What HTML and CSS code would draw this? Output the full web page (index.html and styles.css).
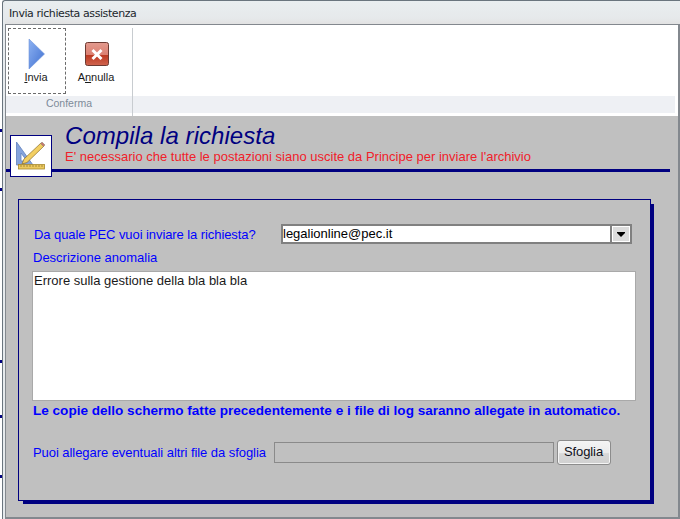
FILE: index.html
```html
<!DOCTYPE html>
<html lang="it">
<head>
<meta charset="utf-8">
<title>Invia richiesta assistenza</title>
<link rel="stylesheet" href="styles.css">
</head>
<body>
<i class="tick tick-a"></i><i class="tick tick-b"></i><i class="tick tick-c"></i><i class="tick tick-d"></i><i class="tick tick-e"></i>
<div class="window">
  <div class="titlebar">Invia richiesta assistenza</div>
  <div class="client">
    <div class="ribbon">
      <div class="group">
        <div class="group-buttons">
          <div class="rbtn rbtn-focus">
            <svg class="rico" width="32" height="34" viewBox="0 0 32 34">
              <defs><linearGradient id="pl" x1="0" y1="0" x2="1" y2="1"><stop offset="0" stop-color="#8db2f2"/><stop offset="1" stop-color="#3f6fd0"/></linearGradient></defs>
              <path d="M8 1 L23.5 16 L8 31 Z" fill="url(#pl)" stroke="#6f94da" stroke-width=".6"/>
            </svg>
            <span class="rlabel"><u>I</u>nvia</span>
          </div>
          <div class="rbtn rbtn-plain">
            <svg class="rico" width="32" height="34" viewBox="0 0 32 34">
              <defs><linearGradient id="rd" x1="0" y1="0" x2="0" y2="1"><stop offset="0" stop-color="#e39a8e"/><stop offset=".55" stop-color="#dc7f70"/><stop offset=".56" stop-color="#bd3a22"/><stop offset="1" stop-color="#d0654f"/></linearGradient></defs>
              <rect x="4.5" y="4.5" width="23" height="23" rx="2" fill="url(#rd)" stroke="#6d3a32"/>
              <path d="M11.5 12 L20.5 21 M20.5 12 L11.5 21" stroke="#fff" stroke-width="3"/>
            </svg>
            <span class="rlabel">A<u>n</u>nulla</span>
          </div>
        </div>
        <div class="group-name">Conferma</div>
      </div>
      <div class="group-rest"><div class="rest-strip"></div></div>
    </div>
    <div class="body">
      <div class="header">
        <div class="logo">
          <svg width="32" height="32" viewBox="0 0 32 32">
            <path d="M1.5 2 L1.5 25 L18 25 Z M6 13 L6 21 L12 21 Z" fill="#86a4dc" fill-rule="evenodd" stroke="#5f80bd" stroke-width=".8"/>
            <path d="M7 24 L9 19 L26 3 L29 6 L12 22.5 Z" fill="#f3cf62" stroke="#8a6d2a" stroke-width=".7"/>
            <path d="M25.5 3.5 L27 2 L30 5 L28.5 6.5 Z" fill="#c9776d" stroke="#7f8a70" stroke-width=".5"/>
            <rect x="3.5" y="24.5" width="26" height="4.5" fill="#ecc95e" stroke="#a8892f" stroke-width=".8"/>
            <path d="M6 25v2M9 25v2M12 25v2M15 25v2M18 25v2M21 25v2M24 25v2M27 25v2" stroke="#8a6d2a" stroke-width=".7"/>
          </svg>
        </div>
        <div class="heading">
          <div class="title">Compila la richiesta</div>
          <div class="subtitle">E' necessario che tutte le postazioni siano uscite da Principe per inviare l'archivio</div>
        </div>
      </div>
      <div class="panel">
        <div class="row-pec">
          <span class="lbl">Da quale PEC vuoi inviare la richiesta?</span>
          <div class="combo">
            <span class="combo-val">legalionline@pec.it</span>
            <span class="combo-btn"><svg width="8" height="5" viewBox="0 0 8 5"><path d="M0 0H8V1L4 5L0 1Z" fill="#000"/></svg></span>
          </div>
        </div>
        <div class="lbl-desc">Descrizione anomalia</div>
        <div class="memo">Errore sulla gestione della bla bla bla</div>
        <div class="note">Le copie dello schermo fatte precedentemente e i file di log saranno allegate in automatico.</div>
        <div class="row-file">
          <span class="lbl lbl-file">Puoi allegare eventuali altri file da sfoglia</span>
          <div class="file-input"></div>
          <div class="browse">Sfoglia</div>
        </div>
      </div>
    </div>
  </div>
</div>
</body>
</html>
```
FILE: styles.css
```css
* { box-sizing: border-box; }
html, body { margin: 0; padding: 0; }
body {
  width: 680px; height: 519px; overflow: hidden; background: #fff;
  padding-left: 2px; position: relative;
  font-family: "Liberation Sans", Arial, sans-serif;
}
.tick { position: absolute; left: 0; width: 2px; height: 3px; background: #000080; }
.tick-a { top: 129px; }
.tick-b { top: 188px; }
.tick-c { top: 360px; }
.tick-d { top: 415px; }
.tick-e { top: 475px; }
.window {
  width: 678px; height: 519px; display: flex; flex-direction: column;
  background: #e6eaed; border: 1px solid #6a757e; border-bottom: 0; border-right: 0;
  border-top-left-radius: 3px; padding-left: 2px;
}
.titlebar {
  height: 23px; padding: 6px 0 0 4px; font: 11px/14px "DejaVu Sans", sans-serif;
  color: #20262c; letter-spacing: -.42px;
  background: linear-gradient(#e9eef0, #e6e9eb 75%, #e2e2e2);
}
.client {
  flex: 1; display: flex; flex-direction: column; min-height: 0;
  border: 1px solid #83888e; border-width: 1px 2px 2px 1px; background: #c0c0c0;
}
.ribbon { height: 91px; display: flex; background: #fff; }
.group { width: 127px; display: flex; flex-direction: column; border-right: 1px solid #c8ccd0; margin-top: 3px; }
.group-buttons { height: 68px; display: flex; padding-left: 2px; gap: 2px; }
.rbtn { width: 58px; height: 66px; display: flex; flex-direction: column; align-items: center; font-size: 11px; color: #1a1a1a; }
.rbtn-focus { border: 1px dashed #6b6b6b; }
.rbtn-plain { border: 1px solid transparent; }
.rico { display: block; margin-top: 9px; }
.rlabel { margin: -2px 0 0 -2px; line-height: 14px; }
.group-name {
  height: 17px; background: #eef0f4; text-align: center;
  font-size: 10.5px; line-height: 14px; color: #7d8b99;
}
.group-rest { flex: 1; padding-top: 71px; padding-right: 3px; }
.rest-strip { height: 17px; background: #eef0f4; }
.body { flex: 1; min-height: 0; background: #c0c0c0; }
.header { position: relative; height: 54px; margin-top: 1px; padding: 6px 0 0 59px; }
.header::after {
  content: ""; position: absolute; left: 0; right: 8px; top: 52px; height: 3px; background: #000080;
}
.logo {
  position: absolute; left: 4px; top: 18px; width: 42px; height: 42px; z-index: 1;
  background: #fff; border: 1px solid #000080; display: flex; align-items: center; justify-content: center;
}
.title { font-size: 24px; line-height: 26px; font-style: italic; color: #000080; letter-spacing: .05px; }
.subtitle { font-size: 13px; line-height: 14px; color: #f0202a; margin-top: 1px; }
.panel {
  margin: 28px 0 0 12px; width: 633px; height: 302px; border: 1px solid #000080;
  box-shadow: 4px 4px 0 -1px #000080; padding: 24px 0 0 14px;
}
.row-pec { display: flex; align-items: center; height: 20px; }
.lbl { font-size: 13px; color: #0000ff; white-space: nowrap; letter-spacing: -.08px; }
.lbl-file { letter-spacing: -.06px; }
.row-pec .lbl { width: 247px; margin-left: 1px; }
.combo {
  width: 351px; height: 20px; display: flex; background: #fff; border: 2px solid #808080;
}
.combo-val { flex: 1; font-size: 13px; line-height: 16px; color: #000; }
.combo-btn {
  width: 18px; display: flex; align-items: center; justify-content: center;
  background: #dcdcdc; border: 1px solid #fff; box-shadow: -2px 0 0 #808080;
}
.lbl-desc { margin-top: 6px; font-size: 13px; line-height: 15px; color: #0000ff; }
.memo {
  margin: 6px 0 0 -1px; width: 604px; height: 130px; background: #fff; border: 1px solid #a9a9a9;
  padding: 2px 1px; font-size: 13px; line-height: 14px; color: #1a1a1a;
}
.note { margin-top: 2px; font-size: 13.55px; line-height: 16px; font-weight: 700; color: #0000ff; }
.row-file { display: flex; align-items: center; margin-top: 21px; height: 25px; }
.row-file .lbl { width: 241px; }
.file-input { width: 280px; height: 21px; border: 1px solid #8a8a8a; background: #c0c0c0; }
.browse {
  width: 54px; height: 25px; margin-left: 3px; padding-right: 1px; text-align: center; font-size: 13px; letter-spacing: -.1px; line-height: 21px; color: #10101a;
  border: 1px solid #8c8c8c; border-radius: 3px;
  background: linear-gradient(#f4f4f4, #ececec 50%, #d8d8d8 55%, #d0d0d0);
  box-shadow: inset 0 0 0 1px #f5f5f5;
}
```
